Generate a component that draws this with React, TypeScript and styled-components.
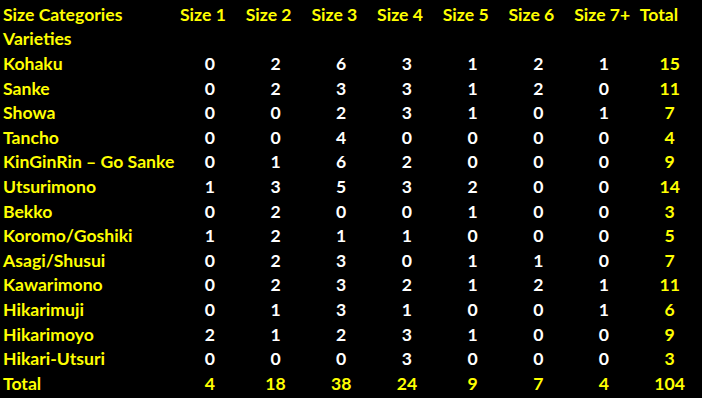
import React from 'react';
import styled, { createGlobalStyle } from 'styled-components';

const GlobalStyle = createGlobalStyle`
  html, body {
    margin: 0;
    padding: 0;
    background: #000;
  }
`;

const sizes = ['Size 1', 'Size 2', 'Size 3', 'Size 4', 'Size 5', 'Size 6', 'Size 7+'];

const varieties: [string, number[]][] = [
  ['Kohaku', [0, 2, 6, 3, 1, 2, 1]],
  ['Sanke', [0, 2, 3, 3, 1, 2, 0]],
  ['Showa', [0, 0, 2, 3, 1, 0, 1]],
  ['Tancho', [0, 0, 4, 0, 0, 0, 0]],
  ['KinGinRin – Go Sanke', [0, 1, 6, 2, 0, 0, 0]],
  ['Utsurimono', [1, 3, 5, 3, 2, 0, 0]],
  ['Bekko', [0, 2, 0, 0, 1, 0, 0]],
  ['Koromo/Goshiki', [1, 2, 1, 1, 0, 0, 0]],
  ['Asagi/Shusui', [0, 2, 3, 0, 1, 1, 0]],
  ['Kawarimono', [0, 2, 3, 2, 1, 2, 1]],
  ['Hikarimuji', [0, 1, 3, 1, 0, 0, 1]],
  ['Hikarimoyo', [2, 1, 2, 3, 1, 0, 0]],
  ['Hikari-Utsuri', [0, 0, 0, 3, 0, 0, 0]],
];

const Sheet = styled.div`
  display: grid;
  grid-template-columns: 177px repeat(8, 65.7px);
  grid-auto-rows: 24.6px;
  padding-top: 2px;
  background: #000;
  font-family: Lato, 'Liberation Sans', sans-serif;
  font-weight: 700;
  font-size: 17.6px;
`;

const Label = styled.div`
  display: flex;
  align-items: center;
  padding-left: 3px;
  color: #ffff00;
  white-space: nowrap;
`;

const Head = styled(Label)``;

const Num = styled.div<{ $total?: boolean }>`
  display: flex;
  align-items: center;
  justify-content: center;
  color: ${p => (p.$total ? '#ffff00' : '#ffffff')};
`;

const Blank = styled.div``;

export default function App() {
  const colTotals = sizes.map((_, i) => varieties.reduce((s, [, v]) => s + v[i], 0));
  const grand = colTotals.reduce((a, b) => a + b, 0);

  return (
    <>
      <GlobalStyle />
      <Sheet>
        <Label>Size Categories</Label>
        {sizes.map(s => (
          <Head key={s}>{s}</Head>
        ))}
        <Head>Total</Head>

        <Label>Varieties</Label>
        {Array.from({ length: 8 }).map((_, i) => (
          <Blank key={i} />
        ))}

        {varieties.map(([name, vals]) => (
          <React.Fragment key={name}>
            <Label>{name}</Label>
            {vals.map((v, i) => (
              <Num key={i}>{v}</Num>
            ))}
            <Num $total>{vals.reduce((a, b) => a + b, 0)}</Num>
          </React.Fragment>
        ))}

        <Label>Total</Label>
        {colTotals.map((v, i) => (
          <Num key={i} $total>
            {v}
          </Num>
        ))}
        <Num $total>{grand}</Num>
      </Sheet>
    </>
  );
}
